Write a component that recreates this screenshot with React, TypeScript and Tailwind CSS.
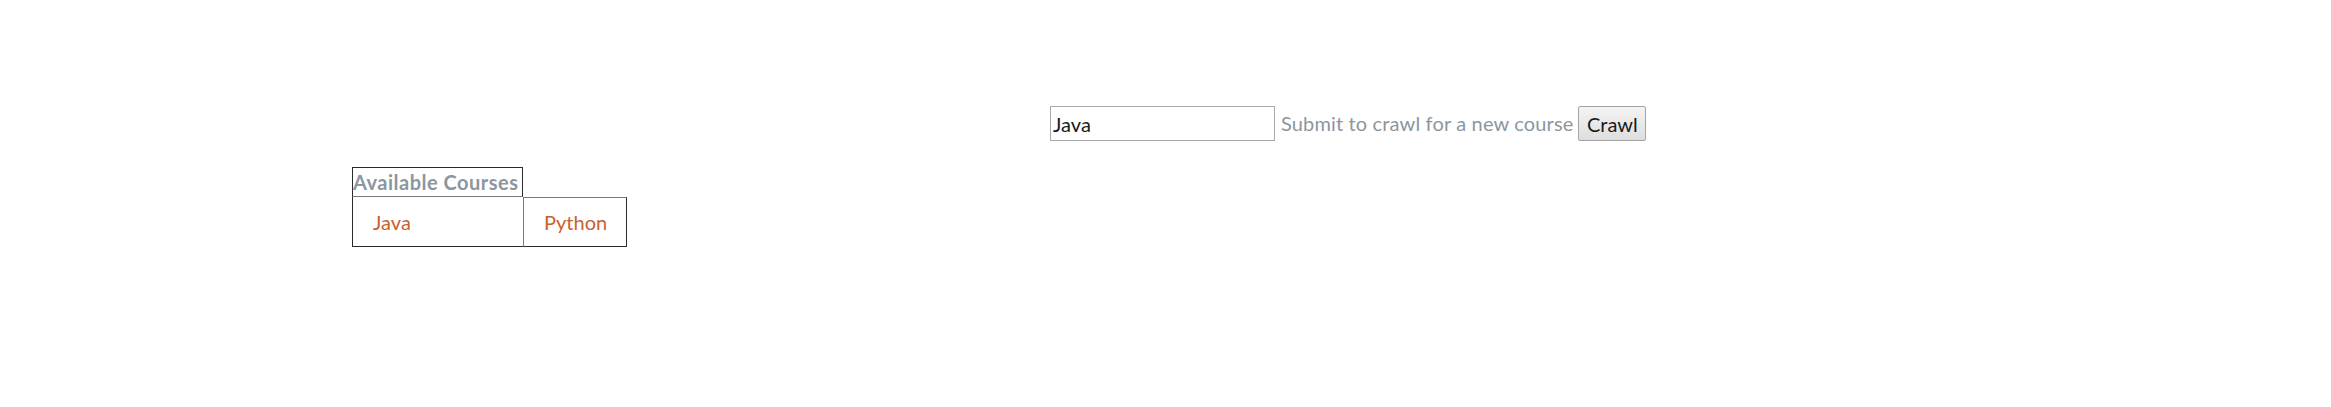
import React from 'react'

const courses = ['Java', 'Python']

function CrawlForm() {
  return (
    <form className="flex items-center h-[35px]" onSubmit={(e) => e.preventDefault()}>
      <input
        type="text"
        defaultValue="Java"
        className="w-[225px] h-[35px] border border-[#a9a9a9] px-[2px] text-[20px] text-[#1a1a1a] outline-none"
      />
      <span className="ml-[6px] -mt-[2px] text-[20px] tracking-[0.15px] text-[#8c96a0]">Submit to crawl for a new course</span>
      <button
        type="submit"
        className="ml-[5px] h-[35px] w-[68px] border border-[#a3a3a3] rounded-[2px] bg-gradient-to-b from-[#f4f4f4] to-[#dedede] text-[20px] text-[#1a1a1a]"
      >
        Crawl
      </button>
    </form>
  )
}

function CourseTable() {
  return (
    <table className="border-separate border-spacing-0 text-[20px] table-fixed">
      <thead>
        <tr>
          <th className="h-[30px] w-[171px] px-0 border border-[#2b2b2b] border-b-[#7a7a7a] font-bold tracking-[0.5px] text-[#8c96a0] text-left leading-none whitespace-nowrap">
            Available Courses
          </th>
        </tr>
      </thead>
      <tbody>
        <tr>
          {courses.map((c, i) => (
            <td
              key={c}
              className={
                i === 0
                  ? 'h-[50px] pl-[20px] border-l border-b border-l-[#2b2b2b] border-b-[#2b2b2b] text-[#c8622e]'
                  : 'h-[50px] w-[104px] pl-[20px] border-l border-r border-b border-t border-l-[#7a7a7a] border-t-[#7a7a7a] border-r-[#2b2b2b] border-b-[#2b2b2b] text-[#c8622e]'
              }
            >
              {c}
            </td>
          ))}
        </tr>
      </tbody>
    </table>
  )
}

export default function App() {
  return (
    <div className="w-[2331px] h-[407px] bg-white font-['Lato','Noto_Sans',sans-serif]">
      <div className="pt-[106px] pl-[1050px]">
        <CrawlForm />
      </div>
      <div className="pt-[26px] pl-[352px]">
        <CourseTable />
      </div>
    </div>
  )
}
